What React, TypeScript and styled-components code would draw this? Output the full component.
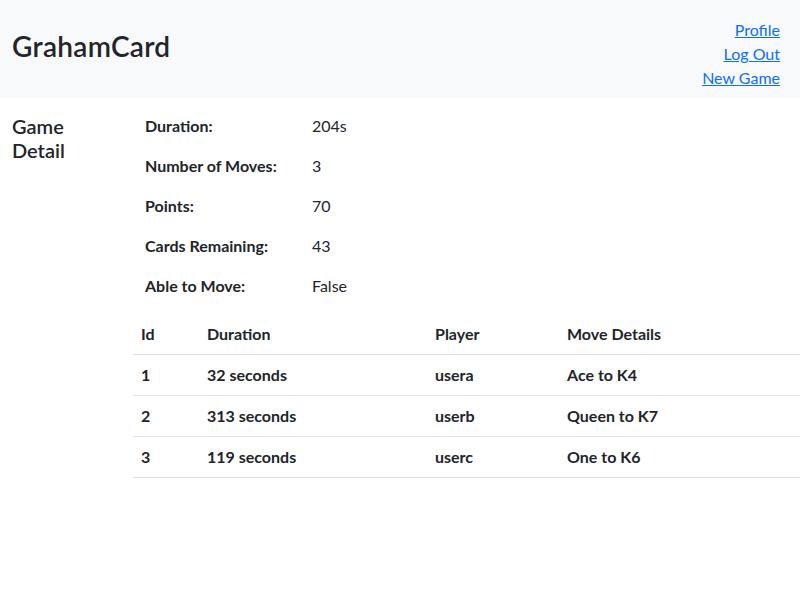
import React from "react";
import styled, { createGlobalStyle } from "styled-components";

const Global = createGlobalStyle`
  body {
    margin: 0;
    font-family: Lato, "Segoe UI", sans-serif;
    font-size: 16px;
    line-height: 24px;
    color: #212529;
    background: #fff;
  }
  * { box-sizing: border-box; }
`;

const Header = styled.header`
  height: 98px;
  background: #f8f9fa;
  display: flex;
  align-items: center;
  justify-content: space-between;
  padding: 0 20px 0 12px;
`;

const Brand = styled.h1`
  margin: 0 0 6px;
  font-size: 28px;
  font-weight: 600;
  line-height: 34px;
  letter-spacing: 0.3px;
`;

const Nav = styled.nav`
  display: flex;
  flex-direction: column;
  align-items: flex-end;
  margin-top: 10px;
`;

const NavLink = styled.a`
  color: #0d6efd;
  text-decoration: underline;
  font-size: 16px;
  line-height: 24px;
`;

const Main = styled.main`
  display: grid;
  grid-template-columns: 133px 1fr;
  padding-top: 16px;
`;

const Side = styled.h5`
  margin: 0;
  padding: 0 12px;
  font-size: 20px;
  font-weight: 600;
  line-height: 24px;
`;

const Content = styled.div`
  display: flex;
  flex-direction: column;
`;

const DetailRow = styled.div`
  display: grid;
  grid-template-columns: 167px 1fr;
  margin-bottom: 16px;
`;

const Label = styled.div`
  padding: 0 12px;
  font-weight: 700;
  white-space: nowrap;
`;

const Value = styled.div`
  padding: 0 12px;
`;

const Table = styled.table`
  width: 100%;
  border-collapse: collapse;
`;

const Col = styled.col<{ $w: number }>`
  width: ${(p) => p.$w}px;
`;

const Cell = styled.td`
  padding: 8px;
  font-weight: 700;
  text-align: left;
  border-bottom: 1px solid #dee2e6;
  white-space: nowrap;
`;

const details: [string, string][] = [
  ["Duration:", "204s"],
  ["Number of Moves:", "3"],
  ["Points:", "70"],
  ["Cards Remaining:", "43"],
  ["Able to Move:", "False"],
];

const moves = [
  ["1", "32 seconds", "usera", "Ace to K4"],
  ["2", "313 seconds", "userb", "Queen to K7"],
  ["3", "119 seconds", "userc", "One to K6"],
];

export default function App() {
  return (
    <>
      <Global />
      <Header>
        <Brand>GrahamCard</Brand>
        <Nav>
          <NavLink href="#">Profile</NavLink>
          <NavLink href="#">Log Out</NavLink>
          <NavLink href="#">New Game</NavLink>
        </Nav>
      </Header>
      <Main>
        <Side>
          Game
          <br />
          Detail
        </Side>
        <Content>
          {details.map(([l, v]) => (
            <DetailRow key={l}>
              <Label>{l}</Label>
              <Value>{v}</Value>
            </DetailRow>
          ))}
          <Table>
            <colgroup>
              <Col $w={66} />
              <Col $w={228} />
              <Col $w={132} />
              <Col $w={241} />
            </colgroup>
            <thead>
              <tr>
                <Cell as="th">Id</Cell>
                <Cell as="th">Duration</Cell>
                <Cell as="th">Player</Cell>
                <Cell as="th">Move Details</Cell>
              </tr>
            </thead>
            <tbody>
              {moves.map((m) => (
                <tr key={m[0]}>
                  {m.map((c, i) => (
                    <Cell key={i}>{c}</Cell>
                  ))}
                </tr>
              ))}
            </tbody>
          </Table>
        </Content>
      </Main>
    </>
  );
}
